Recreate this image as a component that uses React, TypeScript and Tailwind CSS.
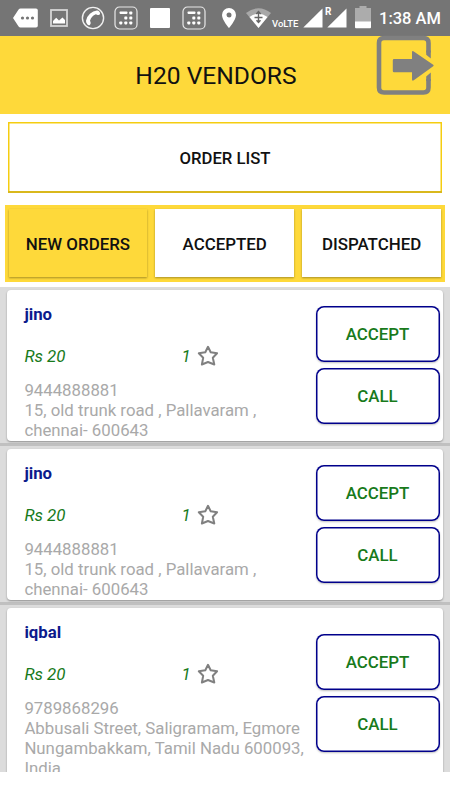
import { useState } from "react"
import { clsx } from "clsx"

type Order = {
  id: number
  name: string
  price: string
  quantity: number
  phone: string
  address: string[]
}

const orders: Order[] = [
  {
    id: 1,
    name: "jino",
    price: "Rs 20",
    quantity: 1,
    phone: "9444888881",
    address: ["15, old trunk road , Pallavaram ,", "chennai- 600643"],
  },
  {
    id: 2,
    name: "jino",
    price: "Rs 20",
    quantity: 1,
    phone: "9444888881",
    address: ["15, old trunk road , Pallavaram ,", "chennai- 600643"],
  },
  {
    id: 3,
    name: "iqbal",
    price: "Rs 20",
    quantity: 1,
    phone: "9789868296",
    address: ["Abbusali Street, Saligramam, Egmore", "Nungambakkam, Tamil Nadu 600093,", "India"],
  },
]

const tabs = ["NEW ORDERS", "ACCEPTED", "DISPATCHED"]

function DialpadIcon({ className }: { className?: string }) {
  return (
    <svg width="24" height="24" viewBox="0 0 24 24" className={className}>
      <rect x="1" y="1" width="22" height="22" rx="4.5" fill="none" stroke="#e8e8e8" strokeWidth="1.2" />
      <g fill="#fff">
        <rect x="5.5" y="5.5" width="8" height="2.4" rx="0.8" />
        <rect x="15.3" y="5.5" width="3" height="3" rx="0.8" />
        <rect x="10.3" y="10.6" width="3" height="3" rx="0.8" />
        <rect x="15.3" y="10.6" width="3" height="3" rx="0.8" />
        <rect x="5.3" y="15.4" width="3" height="3" rx="0.8" />
        <rect x="10.3" y="15.4" width="3" height="3" rx="0.8" />
        <rect x="15.3" y="15.4" width="3" height="3" rx="0.8" />
      </g>
    </svg>
  )
}

function SignalIcon({ className }: { className?: string }) {
  return (
    <svg width="20" height="20" viewBox="0 0 20 20" className={className}>
      <path d="M19.5 0.5V19.5H0.3Z" fill="#fff" />
    </svg>
  )
}

function StatusBar() {
  return (
    <div className="flex h-9 items-center bg-[#757575] pl-[13px] text-white">
      {/* Message */}
      <svg width="25" height="20" viewBox="0 0 25 20" className="shrink-0">
        <path d="M7.5 0.5H23Q24.8 0.5 24.8 2.3V17.7Q24.8 19.5 23 19.5H7.5Q6.3 19.5 5.6 18.4L0 10L5.6 1.6Q6.3 0.5 7.5 0.5Z" fill="#fff" />
        <g fill="#757575">
          <circle cx="9.5" cy="10" r="1.6" />
          <circle cx="14.5" cy="10" r="1.6" />
          <circle cx="19.5" cy="10" r="1.6" />
        </g>
      </svg>
      {/* Picture */}
      <svg width="18" height="18" viewBox="0 0 18 18" className="ml-3 shrink-0">
        <rect x="1" y="1" width="16" height="16" fill="none" stroke="#d5d5d5" strokeWidth="1.8" />
        <path d="M3 14.5V12L6.2 8.8L9 11.5L12.5 8.5L15 11V14.5Z" fill="#fff" />
      </svg>
      {/* Call */}
      <svg width="24" height="24" viewBox="0 0 24 24" className="ml-[13px] shrink-0">
        <circle cx="12" cy="12" r="10.6" fill="none" stroke="#f0f0f0" strokeWidth="1.4" />
        <path
          d="M15.8 4.5Q17 4.2 18.2 5.6Q19.6 7.2 18.9 8.3Q18.2 9.4 16.6 8.9L14.9 8.2Q10.4 10 9 14.7L9.6 16.3Q10 18 8.8 18.9Q7.6 19.6 6.2 18.2Q4.9 16.8 5 14.8Q5.6 10.8 8.9 7.8Q12.2 4.9 15.8 4.5Z"
          fill="#fff"
        />
      </svg>
      <DialpadIcon className="ml-[9px] shrink-0" />
      <div className="ml-3 h-5 w-5 shrink-0 rounded-[1px] bg-white" />
      <DialpadIcon className="ml-3 shrink-0" />
      {/* Location */}
      <svg width="14" height="20" viewBox="0 0 14 20" className="ml-4 shrink-0">
        <path
          fillRule="evenodd"
          d="M7 0A7 7 0 0 0 0 7C0 12 7 20 7 20S14 12 14 7A7 7 0 0 0 7 0ZM7 4.5A2.5 2.5 0 1 1 7 9.5A2.5 2.5 0 0 1 7 4.5Z"
          fill="#fff"
        />
      </svg>
      {/* Wifi */}
      <svg width="25" height="20" viewBox="0 0 25 20" className="ml-2.5 shrink-0">
        <path d="M0 5Q12.5 -4.5 25 5L12.5 20Z" fill="#a8a8a8" />
        <path d="M3.5 9Q12.5 2.5 21.5 9L12.5 20Z" fill="#fff" />
        <path d="M12.5 4V14M10.3 6L12.5 3.5L14.7 6M8.5 9.5H16.5M10.5 12.2L12.5 14.5L14.5 12.2" fill="none" stroke="#666" strokeWidth="1.4" />
      </svg>
      <span className="ml-px w-[27px] shrink-0 pt-[11px] text-[9.5px] leading-3 font-medium">VoLTE</span>
      <SignalIcon className="ml-1 shrink-0" />
      <span className="mb-3 ml-[2px] w-[6px] shrink-0 text-[10px] leading-3 font-bold">R</span>
      <SignalIcon className="-ml-1 shrink-0" />
      {/* Battery */}
      <svg width="16" height="23" viewBox="0 0 16 23" className="mb-0.5 ml-2 shrink-0">
        <path d="M4.5 0H11.5V2H16V16H0V2H4.5Z" fill="#acacac" />
        <path d="M0 15.5H16V21.2Q16 22.2 15 22.2H1Q0 22.2 0 21.2Z" fill="#fff" />
      </svg>
      <span className="ml-2 shrink-0 pt-px text-[16.5px] leading-5 font-medium whitespace-nowrap">1:38 AM</span>
    </div>
  )
}

function Header() {
  return (
    <header className="relative flex h-[78px] items-center justify-center bg-[#fed93a]">
      <h1 className="-ml-[18px] pt-px text-[24.6px] leading-8 text-[#111]">H20 VENDORS</h1>
      {/* The logout icon sits flush with the top edge of the bar */}
      <button className="absolute -top-px left-[376px]" title="Logout">
        <svg width="60" height="62" viewBox="0 0 60 62">
          <path d="M52.5 17.5V8Q52.5 3 47.5 3H8Q3 3 3 8V52.5Q3 57.5 8 57.5H47.5Q52.5 57.5 52.5 52.5V44" fill="none" stroke="#808080" strokeWidth="4.6" />
          <path d="M50.2 15.5H54.8V23.5L50.2 19.8ZM50.2 46V41.5L54.8 37.5V46Z" fill="#808080" />
          <path
            d="M18 24H36V17.5Q36 15.3 37.8 16.6L57.2 29.7Q58.2 30.5 57.2 31.3L37.8 45.3Q36 46.5 36 44.3V37.3H18Q16.8 37.3 16.8 36V25.3Q16.8 24 18 24Z"
            fill="#808080"
          />
        </svg>
      </button>
    </header>
  )
}

function StarIcon() {
  return (
    <svg width="22" height="22" viewBox="0 0 22 22" className="ml-[6px]">
      <path
        d="M11 1.8L13.7 7.3L20.1 8.2L15.8 12.7L17.3 19.5L11 17L4.9 19.5L6.2 12.7L1.8 8.2L8.3 7.3Z"
        fill="none"
        stroke="#808080"
        strokeWidth="2"
        strokeLinejoin="round"
      />
    </svg>
  )
}

function ActionButton({ label }: { label: string }) {
  return (
    <button className="h-14 w-[124px] rounded-lg bg-white pt-[2px] text-[16.9px] font-medium text-[#187a1b] shadow-[inset_0_0_0_1.5px_#00008b,0_1px_2px_rgba(0,0,0,0.25)]">
      {label}
    </button>
  )
}

function OrderCard({ order }: { order: Order }) {
  return (
    <div className="flex items-center justify-between rounded bg-white pr-[3.5px] pl-[17.4px] shadow-[0_1px_2px_rgba(0,0,0,0.35)]">
      <div className="w-[290px] pb-[0.7px]">
        <h2 className="pt-[14.3px] text-[16.8px] leading-5 font-bold text-[#0c1a8c]">{order.name}</h2>
        <div className="mt-[21.4px] flex h-[22px] items-center text-[16.9px] text-[#187a1b] italic">
          <span className="w-[157px]">{order.price}</span>
          <span>{order.quantity}</span>
          <StarIcon />
        </div>
        <div className="mt-[14.1px] text-[16.8px] leading-[19.7px] whitespace-nowrap text-[#a9a9a9]">
          <p>{order.phone}</p>
          {order.address.map((line) => (
            <p key={line}>{line}</p>
          ))}
        </div>
      </div>
      <div className="flex flex-col gap-1.5 pb-px">
        <ActionButton label="ACCEPT" />
        <ActionButton label="CALL" />
      </div>
    </div>
  )
}

export default function App() {
  const [activeTab, setActiveTab] = useState(tabs[0])

  return (
    <div className="h-[800px] w-[450px] overflow-hidden bg-white font-['Roboto',sans-serif]">
      <StatusBar />
      <Header />

      <div className="px-2 pt-2">
        <button className="h-[71px] w-full bg-white pt-[2px] text-[16.7px] font-medium text-[#111] shadow-[inset_0_-2px_0_#d9b81c,inset_0_0_0_1.5px_#f5cd10]">
          ORDER LIST
        </button>
      </div>

      <nav className="mx-[5px] mt-3 flex h-[77px] gap-2 bg-[#fed93a] pt-1 pr-1 pb-[5px] pl-[3.5px]">
        {tabs.map((tab) => (
          <button
            key={tab}
            onClick={() => setActiveTab(tab)}
            className={clsx(
              "flex-1 pt-[3px] text-[16.9px] font-medium whitespace-nowrap text-[#111] shadow-[0_1px_2px_rgba(0,0,0,0.35)]",
              tab === activeTab ? "bg-[#fed93a]" : "bg-white",
            )}
          >
            {tab}
          </button>
        ))}
      </nav>

      <div className="mt-[5px] h-[485px] overflow-hidden bg-[#dcdcdc]">
        {orders.map((order) => (
          <div key={order.id} className="border-b-[3px] border-[#c0c0c0] px-[7px] pt-[2.5px] pb-[2px]">
            <OrderCard order={order} />
          </div>
        ))}
      </div>
    </div>
  )
}
